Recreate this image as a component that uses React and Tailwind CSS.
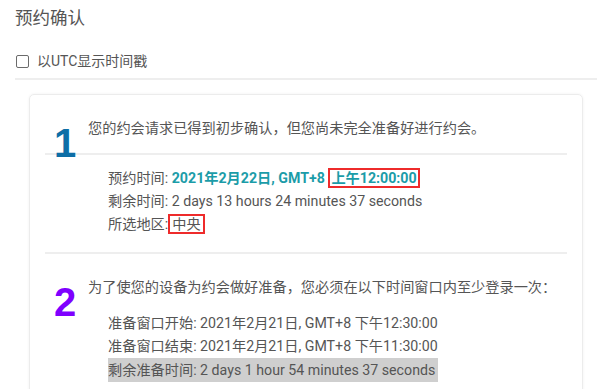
export default function App() {
  const font = { fontFamily: 'Roboto, "Noto Sans CJK SC", sans-serif' };
  return (
    <div
      className="w-[600px] h-[389px] overflow-hidden bg-white text-[#555555] pl-[15px] pr-[3px]"
      style={font}
    >
      <h1 className="pt-[6px] text-[17.5px] leading-[24px] font-normal text-[#555555]">预约确认</h1>
      <label className="mt-[19px] h-[24px] flex items-center text-[14px]">
        <span className="ml-px w-[13px] h-[13px] border-[1.5px] border-[#6b6b6b] rounded-[2px] bg-white"></span>
        <span className="ml-[8px]">以UTC显示时间戳</span>
      </label>
      <div className="mt-[5px] h-[2px] bg-[#eeeeee]"></div>

      <div className="mt-[14px] mx-[14px] h-[400px] rounded-[5px] border border-[#ececec] shadow-[0_0_3px_rgba(0,0,0,0.06)] pt-[23px] px-[15px] text-[14.2px]">
        {/* Section 1 */}
        <div className="flex h-[35px] pl-[9px]">
          <div
            className="w-[34px] shrink-0 text-[40px] font-bold leading-none mt-[5px] text-[#0d6ea6] relative z-10"
            style={{ fontFamily: '"Liberation Sans", Arial, sans-serif' }}
          >
            1
          </div>
          <div className="leading-[20px]">您的约会请求已得到初步确认，但您尚未完全准备好进行约会。</div>
        </div>
        <div className="h-[2px] bg-[#eeeeee]"></div>
        <div className="mt-3 pl-[63px] leading-[23px]">
          <div>
            预约时间:{' '}
            <span className="font-bold text-[#1b9ca8]">2021年2月22日, GMT+8</span>{' '}
            <span className="font-bold text-[#1b9ca8] border-2 border-[#ee2b2b] px-[1px]">上午12:00:00</span>
          </div>
          <div>剩余时间: 2 days 13 hours 24 minutes 37 seconds</div>
          <div>
            所选地区:<span className="border-2 border-[#ee2b2b] px-[2px]">中央</span>
          </div>
        </div>
        <div className="mt-4 h-[2px] bg-[#eeeeee]"></div>

        {/* Section 2 */}
        <div className="pt-[23px] flex h-[58px] pl-[9px]">
          <div
            className="w-[34px] shrink-0 text-[40px] font-bold leading-none mt-[5px] text-[#7f00ff]"
            style={{ fontFamily: '"Liberation Sans", Arial, sans-serif' }}
          >
            2
          </div>
          <div className="leading-[20px]">为了使您的设备为约会做好准备，您必须在以下时间窗口内至少登录一次：</div>
        </div>
        <div className="pl-[63px] leading-[23px]">
          <div>准备窗口开始: 2021年2月21日, GMT+8 下午12:30:00</div>
          <div>准备窗口结束: 2021年2月21日, GMT+8 下午11:30:00</div>
          <div>
            <span className="inline-block bg-[#cfcfcf] leading-[24px] pr-[3px]">剩余准备时间: 2 days 1 hour 54 minutes 37 seconds</span>
          </div>
        </div>
      </div>
    </div>
  );
}
